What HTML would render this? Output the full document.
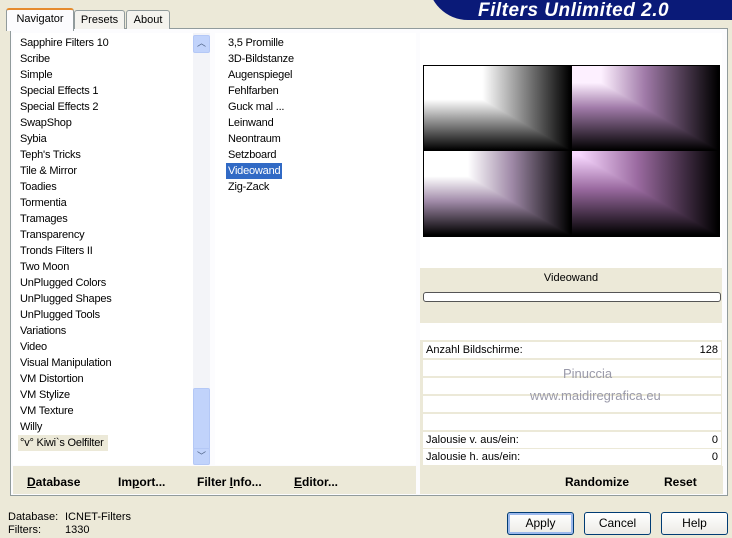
<html><head><style>
body{margin:0;width:732px;height:538px;background:#ece9d8;font-family:"Liberation Sans",sans-serif;font-size:11px;position:relative;overflow:hidden;color:#000}
.a{position:absolute;white-space:nowrap}
.tab{position:absolute;border:1px solid #919b9c;border-bottom:none;background:#f4f3ee;border-radius:3px 3px 0 0;text-align:center;line-height:18px}
.li{position:absolute;left:20px;height:16px;line-height:16px;white-space:nowrap;letter-spacing:-0.2px}
.mi{position:absolute;left:228px;line-height:16px;white-space:nowrap;letter-spacing:-0.2px}
.row{position:absolute;left:423px;width:298px;height:16px;background:#fff;line-height:16px}
.btn{position:absolute;top:512px;width:65px;height:21px;border:1px solid #003c74;border-radius:3px;background:linear-gradient(#fff,#ecebe6);text-align:center;line-height:21px;font-size:12px}
.q{position:absolute;width:146px;height:84px;background-blend-mode:darken}
b{font-size:12px}
</style></head><body>
<div class="a" style="left:428px;top:-30px;width:340px;height:50px;background:#0a1a78;border-radius:0 0 0 40px"></div>
<div class="a" style="left:478px;top:0;font:italic bold 19px 'Liberation Sans',sans-serif;color:#fff;letter-spacing:0.5px">Filters Unlimited 2.0</div>
<div class="a" style="left:10px;top:28px;width:716px;height:466px;border:1px solid #919b9c;background:#fcfcfe"></div>
<div class="tab" style="left:6px;top:8px;width:66px;height:21px;background:#fcfcfe;border-top:2px solid #e68b2c">Navigator</div>
<div class="tab" style="left:74px;top:10px;width:49px;height:18px">Presets</div>
<div class="tab" style="left:126px;top:10px;width:42px;height:18px">About</div>
<div class="a" style="left:13px;top:33px;width:180px;height:432px;background:#fff"></div>
<div class="a" style="left:193px;top:33px;width:17px;height:432px;background:#f3f4f8"></div>
<div class="a" style="left:193px;top:35px;width:15px;height:16px;background:#c1d3fb;border:1px solid #b4c8f6;border-radius:2px;text-align:center;font-size:9px;color:#4d6185">︿</div>
<div class="a" style="left:193px;top:388px;width:15px;height:60px;background:#c1d3fb;border:1px solid #b4c8f6;border-radius:2px"></div>
<div class="a" style="left:193px;top:448px;width:15px;height:15px;background:#c1d3fb;border:1px solid #b4c8f6;border-radius:2px;text-align:center;font-size:9px;color:#4d6185">﹀</div>
<div class="a" style="left:215px;top:33px;width:201px;height:432px;background:#fff"></div>
<div class="a" style="left:420px;top:33px;width:302px;height:432px;background:#fff"></div>
<div class="a" style="left:13px;top:466px;width:403px;height:28px;background:#ece9d8"></div>
<div class="a" style="left:420px;top:466px;width:303px;height:28px;background:#ece9d8"></div>
<div class="a" style="left:27px;top:475px"><b><u>D</u>atabase</b></div>
<div class="a" style="left:118px;top:475px"><b>Im<u>p</u>ort...</b></div>
<div class="a" style="left:197px;top:475px"><b>Filter <u>I</u>nfo...</b></div>
<div class="a" style="left:294px;top:475px"><b><u>E</u>ditor...</b></div>
<div class="a" style="left:565px;top:475px"><b>Randomize</b></div>
<div class="a" style="left:664px;top:475px"><b>Reset</b></div>
<div class="li" style="top:35px">Sapphire Filters 10</div>
<div class="li" style="top:51px">Scribe</div>
<div class="li" style="top:67px">Simple</div>
<div class="li" style="top:83px">Special Effects 1</div>
<div class="li" style="top:99px">Special Effects 2</div>
<div class="li" style="top:115px">SwapShop</div>
<div class="li" style="top:131px">Sybia</div>
<div class="li" style="top:147px">Teph's Tricks</div>
<div class="li" style="top:163px">Tile &amp; Mirror</div>
<div class="li" style="top:179px">Toadies</div>
<div class="li" style="top:195px">Tormentia</div>
<div class="li" style="top:211px">Tramages</div>
<div class="li" style="top:227px">Transparency</div>
<div class="li" style="top:243px">Tronds Filters II</div>
<div class="li" style="top:259px">Two Moon</div>
<div class="li" style="top:275px">UnPlugged Colors</div>
<div class="li" style="top:291px">UnPlugged Shapes</div>
<div class="li" style="top:307px">UnPlugged Tools</div>
<div class="li" style="top:323px">Variations</div>
<div class="li" style="top:339px">Video</div>
<div class="li" style="top:355px">Visual Manipulation</div>
<div class="li" style="top:371px">VM Distortion</div>
<div class="li" style="top:387px">VM Stylize</div>
<div class="li" style="top:403px">VM Texture</div>
<div class="li" style="top:419px">Willy</div>
<div class="li" style="top:435px;left:18px;padding:0 2px;width:86px;background:#ece9d8">°v° Kiwi`s Oelfilter</div>
<div class="mi" style="top:35px">3,5 Promille</div>
<div class="mi" style="top:51px">3D-Bildstanze</div>
<div class="mi" style="top:67px">Augenspiegel</div>
<div class="mi" style="top:83px">Fehlfarben</div>
<div class="mi" style="top:99px">Guck mal ...</div>
<div class="mi" style="top:115px">Leinwand</div>
<div class="mi" style="top:131px">Neontraum</div>
<div class="mi" style="top:147px">Setzboard</div>
<div class="mi" style="top:163px;left:226px;padding:0 2px;background:#316ac5;color:#fff">Videowand</div>
<div class="mi" style="top:179px">Zig-Zack</div>
<div class="a" style="left:423px;top:65px;width:297px;height:172px;background:#000"></div>
<div class="q" style="left:424px;top:66px;background-image:linear-gradient(90deg,#fff 40%,#000 100%),linear-gradient(180deg,#fff 40%,#000 100%)"></div>
<div class="q" style="left:572px;top:66px;background-image:linear-gradient(90deg,#fdf0ff 20%,#a07aa8 50%,#000 100%),linear-gradient(180deg,#fdf0ff 20%,#a07aa8 50%,#000 100%)"></div>
<div class="q" style="left:424px;top:151px;background-image:linear-gradient(90deg,#fff 30%,#a08aa8 60%,#000 100%),linear-gradient(180deg,#fff 30%,#a08aa8 60%,#000 100%)"></div>
<div class="q" style="left:572px;top:151px;background-image:linear-gradient(90deg,#f8d8ff 5%,#9a6aa0 45%,#000 100%),linear-gradient(180deg,#f8d8ff 5%,#9a6aa0 45%,#000 100%)"></div>
<div class="a" style="left:420px;top:268px;width:302px;height:55px;background:#ece9d8"></div>
<div class="a" style="left:420px;top:272px;width:302px;text-align:center">Videowand</div>
<div class="a" style="left:423px;top:292px;width:296px;height:8px;border:1px solid #555;border-radius:3px;background:#fff"></div>
<div class="a" style="left:420px;top:340px;width:302px;height:126px;background:#ece9d8"></div>
<div class="row" style="top:342px">&nbsp;Anzahl Bildschirme:<span style="position:absolute;right:3px">128</span></div>
<div class="row" style="top:360px"></div>
<div class="row" style="top:378px"></div>
<div class="row" style="top:396px"></div>
<div class="row" style="top:414px"></div>
<div class="row" style="top:432px">&nbsp;Jalousie v. aus/ein:<span style="position:absolute;right:3px">0</span></div>
<div class="row" style="top:449px">&nbsp;Jalousie h. aus/ein:<span style="position:absolute;right:3px">0</span></div>
<div class="a" style="left:563px;top:366px;font-size:13px;color:#9a9aaa">Pinuccia</div>
<div class="a" style="left:530px;top:388px;font-size:13px;color:#9a9aaa">www.maidiregrafica.eu</div>
<div class="a" style="left:8px;top:511px">Database:</div>
<div class="a" style="left:65px;top:511px">ICNET-Filters</div>
<div class="a" style="left:8px;top:524px">Filters:</div>
<div class="a" style="left:65px;top:524px">1330</div>
<div class="btn" style="left:507px;box-shadow:inset 0 0 0 2px #9bb8ec">Apply</div>
<div class="btn" style="left:584px">Cancel</div>
<div class="btn" style="left:661px">Help</div>
</body></html>
